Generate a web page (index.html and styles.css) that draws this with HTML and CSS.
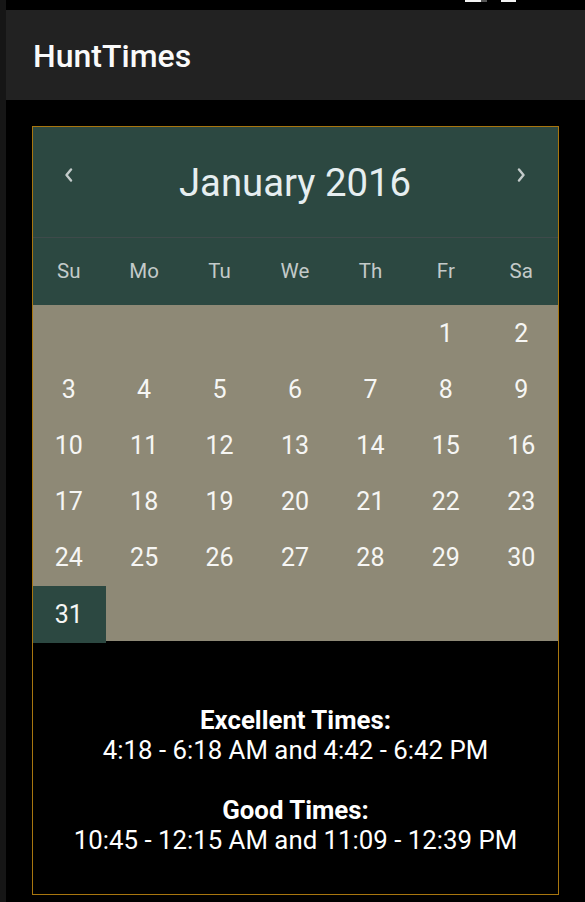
FILE: index.html
```html
<!DOCTYPE html>
<html lang="en">
<head>
<meta charset="utf-8">
<title>HuntTimes</title>
<link rel="stylesheet" href="styles.css">
</head>
<body>
<div class="edge"></div>
<div class="main">
  <div class="status">
    <span class="sicon sicon-a"><i class="fill"></i><i class="rest"></i></span>
    <span class="sicon sicon-b"></span>
  </div>
  <header class="appbar"><h1 class="apptitle">HuntTimes</h1></header>
  <div class="content">
    <div class="card">
      <div class="cal-head">
        <div class="nav">
          <span class="arrow"><svg width="10" height="14" viewBox="0 0 10 14"><polyline points="7,1.5 2.5,7 7,12.5" fill="none" stroke="#c3cbca" stroke-width="2.4" stroke-linecap="round" stroke-linejoin="round"/></svg></span>
          <span class="month">January 2016</span>
          <span class="arrow"><svg width="10" height="14" viewBox="0 0 10 14"><polyline points="3,1.5 7.5,7 3,12.5" fill="none" stroke="#c3cbca" stroke-width="2.4" stroke-linecap="round" stroke-linejoin="round"/></svg></span>
        </div>
        <div class="weekdays">
          <span>Su</span><span>Mo</span><span>Tu</span><span>We</span><span>Th</span><span>Fr</span><span>Sa</span>
        </div>
      </div>
      <div class="days">
        <span></span><span></span><span></span><span></span><span></span><span>1</span><span>2</span>
        <span>3</span><span>4</span><span>5</span><span>6</span><span>7</span><span>8</span><span>9</span>
        <span>10</span><span>11</span><span>12</span><span>13</span><span>14</span><span>15</span><span>16</span>
        <span>17</span><span>18</span><span>19</span><span>20</span><span>21</span><span>22</span><span>23</span>
        <span>24</span><span>25</span><span>26</span><span>27</span><span>28</span><span>29</span><span>30</span>
        <span class="selected">31</span>
      </div>
      <div class="times">
        <div class="block">
          <div class="label">Excellent Times:</div>
          <div class="range">4:18 - 6:18 AM and 4:42 - 6:42 PM</div>
        </div>
        <div class="block">
          <div class="label">Good Times:</div>
          <div class="range">10:45 - 12:15 AM and 11:09 - 12:39 PM</div>
        </div>
      </div>
    </div>
  </div>
</div>
</body>
</html>
```
FILE: styles.css
```css
html, body {
  margin: 0;
  padding: 0;
  background: #000;
}
body {
  display: flex;
  min-height: 902px;
  font-family: Roboto, "Noto Sans", sans-serif;
  color: #fff;
}
.edge {
  width: 6px;
  flex: none;
  background: #161616;
}
.main {
  flex: 1;
  display: flex;
  flex-direction: column;
}
.status {
  height: 10px;
  display: flex;
  justify-content: flex-end;
  align-items: flex-start;
  gap: 14px;
  padding-right: 69px;
}
.sicon {
  display: flex;
  height: 2px;
}
.sicon-a .fill { display: block; width: 16px; height: 2px; background: #f2f2f2; }
.sicon-a .rest { display: block; width: 6px; height: 2px; background: #555; }
.sicon-b { width: 15px; background: #f2f2f2; }
.appbar {
  height: 90px;
  background: #222;
  display: flex;
  align-items: center;
  padding-left: 27px;
}
.apptitle {
  margin: 0;
  font-size: 32px;
  font-weight: 500;
  color: #fafafa;
  padding-top: 2px;
}
.content {
  padding: 26px 26px 0 26px;
}
.card {
  border: 1px solid #a8760f;
  overflow: hidden;
}
.cal-head {
  background: #2c4841;
}
.nav,
.weekdays,
.days {
  display: grid;
  grid-template-columns: repeat(7, 1fr);
  width: calc(100% + 3px);
  margin-left: -2px;
}
.nav {
  height: 110px;
  align-items: center;
  border-bottom: 1px solid #3e4a4a;
}
.arrow {
  display: flex;
  justify-content: center;
  margin-top: -14px;
}
.month {
  grid-column: 2 / 7;
  text-align: center;
  font-size: 38.3px;
  color: #e6eef0;
  font-weight: 400;
}
.weekdays {
  height: 67px;
  align-items: center;
  justify-items: center;
  font-size: 20.5px;
  color: #c3cac9;
  padding-bottom: 2px;
  box-sizing: border-box;
}
.days {
  background: #8e8976;
  grid-auto-rows: 56px;
  font-size: 25px;
  color: #f6f6f4;
}
.days span {
  display: flex;
  align-items: center;
  justify-content: center;
}
.days .selected {
  background: #2c4841;
  position: relative;
  top: 1px;
  margin-bottom: -1px;
}
.times {
  padding: 64px 0 39px;
  text-align: center;
  font-size: 25.8px;
  line-height: 30px;
  color: #fff;
  display: flex;
  flex-direction: column;
  gap: 30px;
}
.label {
  font-weight: 700;
}
```
